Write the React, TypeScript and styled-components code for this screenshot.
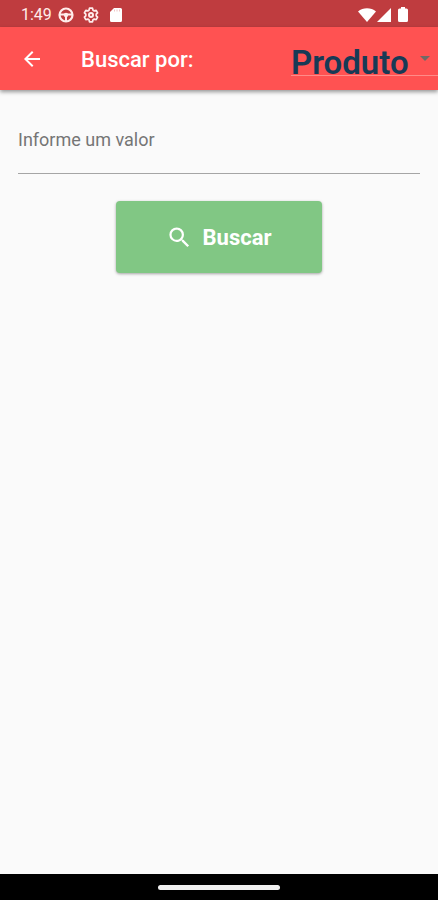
import React, { useState } from "react";
import styled, { createGlobalStyle } from "styled-components";

const GlobalStyle = createGlobalStyle`
  *, *::before, *::after { box-sizing: border-box; }
  body {
    margin: 0;
    background: #fafafa;
    font-family: Roboto, "Liberation Sans", sans-serif;
  }
`;

const Screen = styled.div`
  display: flex;
  flex-direction: column;
  min-height: 100vh;
  background: #fafafa;
`;

const StatusBar = styled.div`
  display: flex;
  align-items: center;
  justify-content: space-between;
  height: 27px;
  padding: 2px 30px 0 21px;
  background: #bf3c3f;
  color: #fff;
`;

const StatusGroup = styled.div<{ $gap: number }>`
  display: flex;
  align-items: center;
  gap: ${(p) => p.$gap}px;
`;

const Clock = styled.time`
  font-size: 16px;
  line-height: 20px;
  color: #ffeceb;
`;

const AppBar = styled.header`
  display: flex;
  align-items: center;
  height: 63px;
  padding-left: 20px;
  background: #ff5252;
  box-shadow: 0 2px 4px rgba(0, 0, 0, 0.4);
`;

const BackButton = styled.button`
  display: flex;
  padding: 0;
  border: 0;
  background: none;
  color: #fff;
  cursor: pointer;
`;

const Title = styled.h1`
  flex: 1;
  margin: 0 0 0 37px;
  padding-top: 2px;
  color: #fff;
  font-size: 22px;
  line-height: 28px;
  font-weight: 500;
`;

const SelectField = styled.div`
  display: grid;
  grid-template-columns: 1fr 26px;
  align-items: center;
  width: 147px;
  padding-top: 6px;
  border-bottom: 1px solid #ff8b88;
`;

const Select = styled.select`
  grid-area: 1 / 1 / 2 / 3;
  width: 100%;
  height: 28px;
  padding: 2px 0 0;
  border: 0;
  appearance: none;
  background: none;
  color: #173a56;
  font-family: inherit;
  font-size: 33px;
  line-height: 28px;
  font-weight: 600;
  cursor: pointer;
`;

const SelectArrow = styled.svg`
  grid-area: 1 / 2 / 2 / 3;
  justify-self: center;
  align-self: start;
  margin-top: 9px;
  pointer-events: none;
`;

const Form = styled.form`
  display: flex;
  flex: 1;
  flex-direction: column;
  padding: 38px 18px 0;
`;

const Label = styled.label`
  color: #757575;
  font-size: 18px;
  line-height: 24px;
`;

const Input = styled.input`
  width: 100%;
  height: 22px;
  padding: 0;
  border: 0;
  border-bottom: 1px solid #a5a5a5;
  border-radius: 0;
  outline: 0;
  background: none;
  color: #212121;
  font-family: inherit;
  font-size: 18px;
`;

const SearchButton = styled.button`
  display: flex;
  align-items: center;
  align-self: center;
  justify-content: center;
  gap: 10px;
  height: 72px;
  margin-top: 27px;
  padding: 0 51px 0 50px;
  border: 0;
  border-radius: 4px;
  background: #81c784;
  box-shadow: 0 1px 3px rgba(0, 0, 0, 0.35);
  color: #fff;
  font-family: inherit;
  font-size: 22px;
  line-height: 28px;
  font-weight: 700;
  cursor: pointer;
`;

const ButtonText = styled.span`
  padding-top: 2px;
`;

const NavigationBar = styled.footer`
  display: flex;
  align-items: center;
  justify-content: center;
  height: 26px;
  background: #000;
`;

const HomeHandle = styled.div`
  width: 122px;
  height: 5px;
  border-radius: 3px;
  background: #f0f0f0;
`;

function WheelIcon() {
  return (
    <svg width="16" height="16" viewBox="0 0 16 16" fill="none" stroke="#ffeceb" aria-hidden="true">
      <circle cx="8" cy="8" r="6.5" strokeWidth="2.2" />
      <path d="M2 7.5h12M8 8v6" strokeWidth="2" />
      <circle cx="8" cy="8" r="2.2" fill="#ffeceb" stroke="none" />
    </svg>
  );
}

function GearIcon() {
  return (
    <svg width="16" height="16" viewBox="0 0 16 16" fill="none" stroke="#ffeceb" aria-hidden="true">
      <path
        d="M6.5 1.2h3l.5 2 1.2.7 2-.6 1.4 2.5-1.4 1.4v1.6l1.4 1.4-1.4 2.5-2-.6-1.2.7-.5 2h-3l-.5-2-1.2-.7-2 .6-1.4-2.5L2.8 8.8V7.2L1.4 5.8l1.4-2.5 2 .6L6 3.2z"
        strokeWidth="1.7"
        strokeLinejoin="round"
      />
      <circle cx="8" cy="8" r="2" strokeWidth="2" />
    </svg>
  );
}

function CardIcon() {
  return (
    <svg width="12" height="14" viewBox="0 0 12 14" aria-hidden="true">
      <path d="M4 0h6.5A1.5 1.5 0 0 1 12 1.5v11a1.5 1.5 0 0 1-1.5 1.5h-9A1.5 1.5 0 0 1 0 12.5V4z" fill="#fff" />
      <path d="M4.5 1.5v2M7 1.5v2M9.5 1.5v2" stroke="#efc4c4" strokeWidth="1" />
    </svg>
  );
}

function WifiIcon() {
  return (
    <svg width="18" height="14" viewBox="0 0 18 14" aria-hidden="true">
      <path d="M0 3.5C5 -.7 13 -.7 18 3.5L9 14z" fill="#fff" />
    </svg>
  );
}

function SignalIcon() {
  return (
    <svg width="14" height="14" viewBox="0 0 14 14" aria-hidden="true">
      <path d="M14 0v14H0z" fill="#fff" />
    </svg>
  );
}

function BatteryIcon() {
  return (
    <svg width="10" height="15" viewBox="0 0 10 15" aria-hidden="true">
      <path d="M3 0h4v1.5h1.5A1.5 1.5 0 0 1 10 3v10.5A1.5 1.5 0 0 1 8.5 15h-7A1.5 1.5 0 0 1 0 13.5V3a1.5 1.5 0 0 1 1.5-1.5H3z" fill="#fff" />
    </svg>
  );
}

export default function App() {
  const [value, setValue] = useState("");

  return (
    <Screen>
      <GlobalStyle />
      <StatusBar>
        <StatusGroup $gap={11}>
          <StatusGroup $gap={9}>
            <StatusGroup $gap={6}>
              <Clock>1:49</Clock>
              <WheelIcon />
            </StatusGroup>
            <GearIcon />
          </StatusGroup>
          <CardIcon />
        </StatusGroup>
        <StatusGroup $gap={7}>
          <StatusGroup $gap={1}>
            <WifiIcon />
            <SignalIcon />
          </StatusGroup>
          <BatteryIcon />
        </StatusGroup>
      </StatusBar>
      <AppBar>
        <BackButton type="button" aria-label="Voltar">
          <svg width="24" height="24" viewBox="0 0 24 24" fill="currentColor" aria-hidden="true">
            <path d="M20 11H7.83l5.59-5.59L12 4l-8 8 8 8 1.41-1.41L7.83 13H20z" />
          </svg>
        </BackButton>
        <Title>Buscar por:</Title>
        <SelectField>
          <Select aria-label="Buscar por" defaultValue="produto">
            <option value="produto">Produto</option>
          </Select>
          <SelectArrow width="10" height="5" viewBox="0 0 10 5" aria-hidden="true">
            <path d="M0 0h10L5 5z" fill="#6f6a66" />
          </SelectArrow>
        </SelectField>
      </AppBar>
      <Form onSubmit={(e) => e.preventDefault()}>
        <Label htmlFor="valor">Informe um valor</Label>
        <Input id="valor" type="text" value={value} onChange={(e) => setValue(e.target.value)} />
        <SearchButton type="submit">
          <svg width="27" height="27" viewBox="0 0 24 24" fill="currentColor" aria-hidden="true">
            <path d="M15.5 14h-.79l-.28-.27A6.47 6.47 0 0 0 16 9.5 6.5 6.5 0 1 0 9.5 16c1.61 0 3.09-.59 4.23-1.57l.27.28v.79l5 4.99L20.49 19zm-6 0C7.01 14 5 11.99 5 9.5S7.01 5 9.5 5 14 7.01 14 9.5 11.99 14 9.5 14z" />
          </svg>
          <ButtonText>Buscar</ButtonText>
        </SearchButton>
      </Form>
      <NavigationBar>
        <HomeHandle />
      </NavigationBar>
    </Screen>
  );
}
